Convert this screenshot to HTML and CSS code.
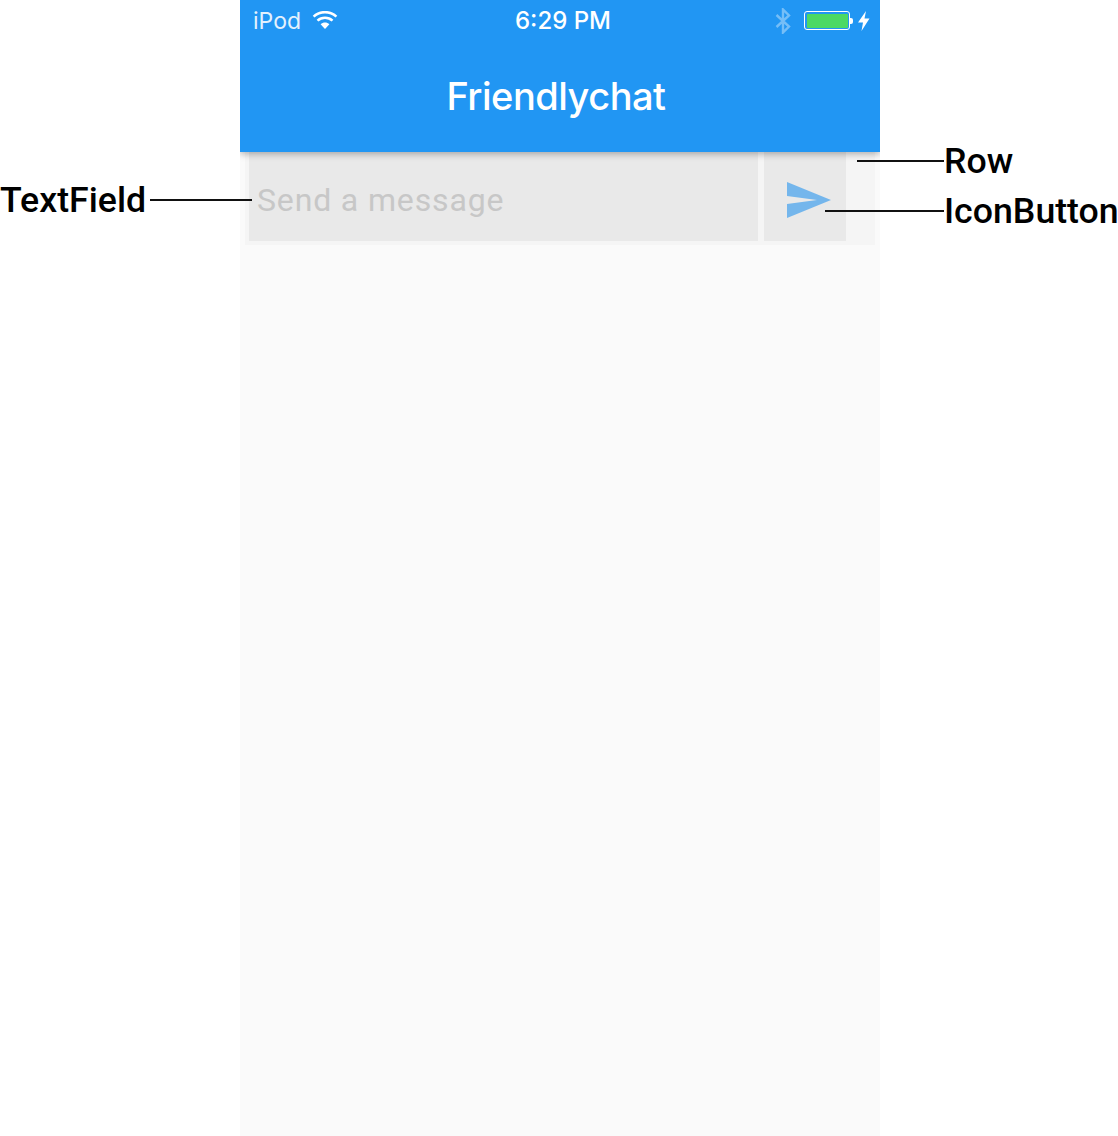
FILE: index.html
```html
<!DOCTYPE html>
<html lang="en">
<head>
<meta charset="utf-8">
<title>Friendlychat</title>
<link rel="stylesheet" href="styles.css">
</head>
<body>
<div class="canvas">
  <div class="phone">
    <header class="appbar">
      <div class="status">
        <div class="status-left">
          <span class="carrier">iPod</span>
          <svg class="wifi" width="26" height="18" viewBox="0 0 26 18"><path d="M13 18 8.600 13.300C11.200 11 14.800 11 17.400 13.300Z" fill="#fff"/><path d="M5.500 9.600C9.700 5.700 16.300 5.700 20.500 9.600" fill="none" stroke="#fff" stroke-width="2.600"/><path d="M1.600 5.600C8.200-.3 17.800-.3 24.400 5.600" fill="none" stroke="#fff" stroke-width="2.600"/></svg>
        </div>
        <span class="time">6:29 PM</span>
        <div class="status-right">
          <svg class="bt" width="16" height="26" viewBox="0 0 16 26"><path d="M1.500 7 14 18.500 8 24.500V1.500L14 7.500 1.500 19" fill="none" stroke="#fff" stroke-opacity=".38" stroke-width="2.400"/></svg>
          <div class="battery"><div class="battery-fill"></div></div>
          <div class="battery-cap"></div>
          <svg class="bolt" width="12" height="20" viewBox="0 0 12 20"><path d="M8 0 0 11.500H5L3.500 20 11.500 7.500H6.500Z" fill="#fff"/></svg>
        </div>
      </div>
      <h1 class="title">Friendlychat</h1>
    </header>
    <div class="row">
      <div class="textfield"><span class="hint">Send a message</span></div>
      <div class="iconbutton">
        <svg width="44" height="36" viewBox="0 0 44 36"><path d="M0 0 44 18 0 36V22L30 18 0 14Z" fill="#74b6ec"/></svg>
      </div>
    </div>
  </div>

  <div class="callout callout-textfield"><span class="label">TextField</span><span class="rule"></span></div>
  <div class="callout callout-row"><span class="rule"></span><span class="label">Row</span></div>
  <div class="callout callout-iconbutton"><span class="rule"></span><span class="label">IconButton</span></div>
</div>
</body>
</html>
```

FILE: styles.css
```css
* { box-sizing: border-box; }
html, body { margin: 0; padding: 0; background: #fff; }
.canvas { position: relative; width: 1118px; height: 1136px; overflow: hidden; }
.phone { margin-left: 240px; width: 640px; height: 1136px; background: #fafafa; display: flex; flex-direction: column; overflow: hidden; }
.appbar { height: 152px; background: #2196f3; color: #fff; box-shadow: 0 2px 7px rgba(0,0,0,.3); position: relative; flex: none; }
.status { height: 41px; padding: 0 10px 0 13px; display: grid; grid-template-columns: 1fr auto 1fr; align-items: center; font-family: Inter, "Liberation Sans", sans-serif; font-size: 23px; }
.status-left { display: flex; align-items: center; gap: 11px; }
.carrier { font-weight: 400; color: #e3f1fd; }
.wifi { margin-top: -2px; }
.time { font-weight: 500; font-size: 24px; margin-left: 3px; }
.status-right { display: flex; align-items: center; justify-content: flex-end; }
.bt { margin-right: 13px; }
.battery { width: 46px; height: 19px; border: 1.500px solid #fff; border-radius: 3px; padding: 1.500px; }
.battery-fill { height: 100%; background: #4cd964; border-radius: 1px; }
.battery-cap { width: 3px; height: 6px; background: #fff; border-radius: 0 2px 2px 0; margin-right: 5px; }
.title { margin: 0; height: 111px; padding-right: 8px; text-align: center; font-family: Inter, "Liberation Sans", sans-serif; font-size: 38px; font-weight: 500; line-height: 110px; letter-spacing: -.5px; }
.row { margin: 0 5px; height: 93px; background: #f5f5f5; padding: 0 29px 4px 4px; display: flex; gap: 6px; }
.textfield { flex: 1; background: #e9e9e9; display: flex; align-items: center; padding: 7px 8px 0; }
.hint { font-family: Roboto, "Liberation Sans", sans-serif; font-size: 32px; color: #c7c7c7; letter-spacing: .85px; }
.iconbutton { width: 82px; background: #e9e9e9; display: flex; align-items: center; justify-content: center; padding: 6px 0 0 8px; }
.callout { position: absolute; display: flex; align-items: center; font-family: Roboto, "Liberation Sans", sans-serif; font-size: 35.700px; font-weight: 500; color: #000; line-height: 40px; height: 40px; }
.rule { display: block; height: 2px; background: #111; }
.callout-textfield { left: 0; top: 180px; gap: 4px; }
.callout-textfield .rule { width: 102px; }
.callout-row { left: 857px; top: 141px; }
.callout-row .rule { width: 87px; }
.callout-iconbutton { left: 825px; top: 191px; }
.callout-iconbutton .rule { width: 119px; }
```
